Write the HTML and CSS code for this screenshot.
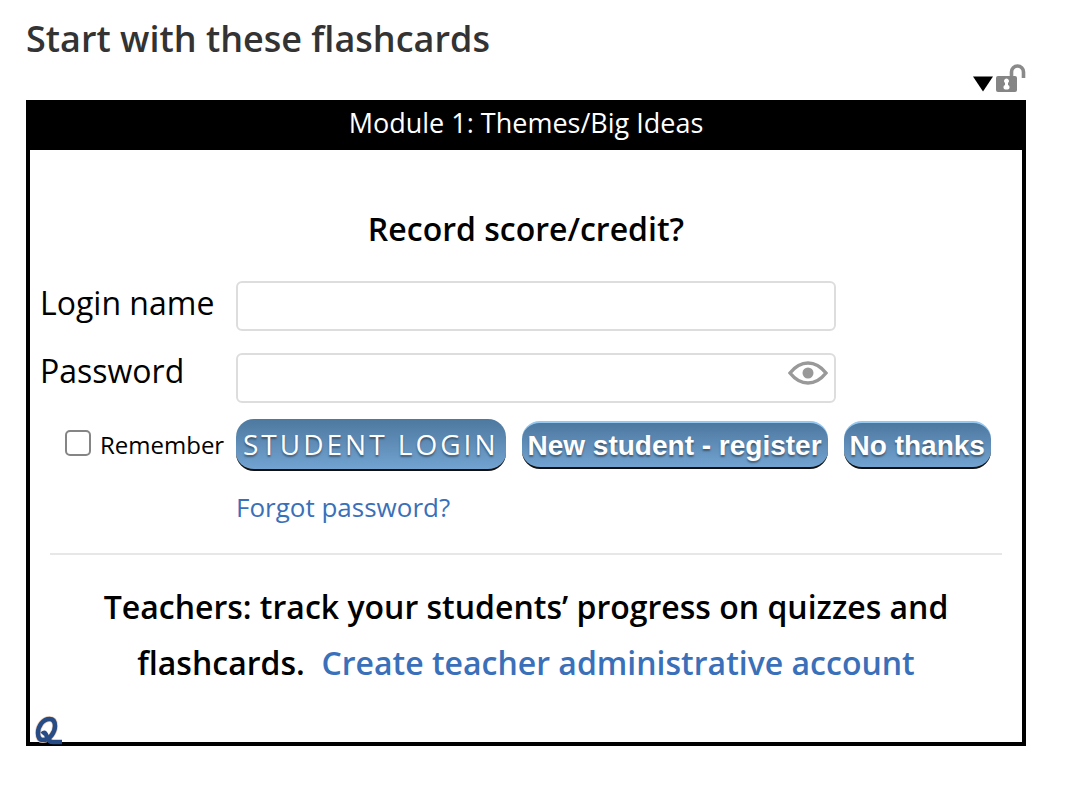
FILE: index.html
```
<!DOCTYPE html>
<html lang="en">
<head>
    <meta charset="UTF-8">
    <meta name="viewport" content="width=device-width, initial-scale=1.0">
    <title>Module 1: Themes/Big Ideas</title>
    <link rel="stylesheet" href="styles.css">
</head>
<body>

    <h2 class="page-title">Start with these flashcards</h2>

    <div class="tools">
        <svg class="arrow" viewBox="0 0 20 15" aria-hidden="true"><path d="M0 0h20L10 15z"/></svg>
        <svg class="lock" viewBox="0 0 30 28" aria-hidden="true">
            <path d="M15.500 13V8a6 6 0 0 1 12 0v6" fill="none" stroke="#8a8a8a" stroke-width="3.600"/>
            <rect x="0" y="12" width="21" height="16" rx="2" fill="#858585"/>
            <path d="M10.500 14.500a2.500 2.500 0 0 1 1.500 4.500v2a2.400 2.400 0 0 1 0 4.500h-3a2.400 2.400 0 0 1 0-4.500v-2a2.500 2.500 0 0 1 1.500-4.500z" fill="#fff"/>
        </svg>
    </div>

    <div class="quiz">
        <div class="quiz-header">Module 1: Themes/Big Ideas</div>
        <form class="login" id="loginForm">
            <h3>Record score/credit?</h3>
            <div class="fields">
                <label for="login">Login name</label>
                <input type="text" id="login" class="text-box">

                <label for="password">Password</label>
                <div class="password-box">
                    <input type="password" id="password" class="text-box">
                    <svg class="eye" viewBox="0 0 40 24" aria-hidden="true">
                        <path d="M2 12Q10 2 20 2T38 12Q30 22 20 22T2 12z" fill="none" stroke="#999" stroke-width="3.500"/>
                        <circle cx="20" cy="12" r="5.500" fill="#999"/>
                    </svg>
                </div>

                <div class="remember">
                    <input type="checkbox" id="remember">
                    <label for="remember">Remember</label>
                </div>
                <div class="buttons">
                    <button type="submit" class="btn btn-login">STUDENT LOGIN</button>
                    <button type="button" class="btn">New student - register</button>
                    <button type="button" class="btn">No thanks</button>
                </div>

                <a class="forgot" href="#">Forgot password?</a>
            </div>
        </form>
        <hr>
        <p class="teachers">Teachers: track your students’ progress on quizzes and flashcards.&nbsp; <a href="#">Create teacher administrative account</a></p>
        <svg class="logo" viewBox="0 0 27 30" aria-hidden="true">
            <path d="M14.500 4C8 4 3 11 3 18c0 5 2 7 5 7 7 0 12-8 12-14 0-4-1.500-7-5.500-7z" fill="none" stroke="#f0d3bd" stroke-width="6"/>
            <path d="M14.500 4C8 4 3 11 3 18c0 5 2 7 5 7 7 0 12-8 12-14 0-4-1.500-7-5.500-7z" fill="none" stroke="#274b85" stroke-width="4.500"/>
            <path d="M7 19c3-3 4 0 5 3s3 5 6 5h9" fill="none" stroke="#274b85" stroke-width="4.500"/>
        </svg>
    </div>

</body>
</html>
```
FILE: styles.css
```
* {
    box-sizing: border-box;
}
body {
    margin: 0;
    padding: 14px 44px 40px 26px;
    font-family: "Open Sans", sans-serif;
    color: #000;
    background-color: #fff;
}
a {
    color: #3a70b9;
    text-decoration: none;
}
.page-title {
    margin: 0;
    font-size: 36px;
    line-height: 50px;
    font-weight: 600;
    color: #333;
}
.tools {
    display: flex;
    justify-content: flex-end;
    align-items: flex-end;
    gap: 3px;
    height: 36px;
    padding-bottom: 8px;
}
.arrow {
    width: 20px;
    height: 16px;
}
.lock {
    width: 30px;
    height: 28px;
}
.quiz {
    position: relative;
    border: 4px solid #000;
}
.quiz-header {
    padding-bottom: 8px;
    background-color: #000;
    color: #fff;
    font-size: 27px;
    line-height: 38px;
    text-align: center;
}
h3 {
    margin: 0;
    padding: 55px 0 29px;
    font-size: 32px;
    line-height: 47px;
    font-weight: 600;
    text-align: center;
}
.fields {
    display: grid;
    grid-template-columns: 196px 1fr;
    padding: 0 10px;
    font-size: 32px;
    line-height: 44px;
}
.text-box {
    display: block;
    width: 100%;
    max-width: 600px;
    height: 50px;
    margin-bottom: 18px;
    padding: 0 10px;
    border: 2px solid #ddd;
    border-radius: 6px;
    background-color: #fff;
    font-family: inherit;
    font-size: 26px;
}
.password-box {
    position: relative;
    max-width: 600px;
    padding: 4px 0 16px;
}
.password-box .text-box {
    margin-bottom: 0;
}
.eye {
    position: absolute;
    top: 12px;
    right: 8px;
    width: 40px;
    height: 24px;
}
.remember {
    display: flex;
    align-items: center;
    gap: 9px;
    padding-left: 25px;
    font-size: 24px;
}
.remember input {
    appearance: none;
    width: 26px;
    height: 26px;
    margin: 0 0 4px;
    border: 2px solid #858585;
    border-radius: 5px;
    background-color: #fff;
}
.buttons {
    display: flex;
    align-items: center;
    gap: 16px;
}
.btn {
    height: 48px;
    padding: 2px 6px 0;
    border: none;
    border-top: 2px solid #96c8f0;
    border-bottom: 2px solid #111;
    border-radius: 18px;
    background: linear-gradient(#4d789f, #72a3d1);
    color: #fff;
    font-family: "Liberation Sans", Arial, sans-serif;
    font-size: 28px;
    font-weight: bold;
    white-space: nowrap;
    text-shadow: 0 2px 2px rgba(0, 0, 0, 0.4);
    cursor: pointer;
}
.btn-login {
    height: 52px;
    padding: 0 7px;
    border-top: none;
    font-family: inherit;
    font-weight: 500;
    letter-spacing: 3px;
}
.forgot {
    grid-column: 2;
    padding-top: 18px;
    font-size: 26px;
    line-height: 36px;
}
hr {
    height: 2px;
    margin: 28px 20px 0;
    border: none;
    background-color: #e7e7e7;
}
.teachers {
    margin: 0;
    padding: 24px 50px 51px;
    font-size: 32px;
    line-height: 56px;
    font-weight: 600;
    text-align: center;
}
/* sits over the bottom border */
.logo {
    position: absolute;
    left: 5px;
    bottom: -3px;
    width: 27px;
    height: 30px;
}
```
